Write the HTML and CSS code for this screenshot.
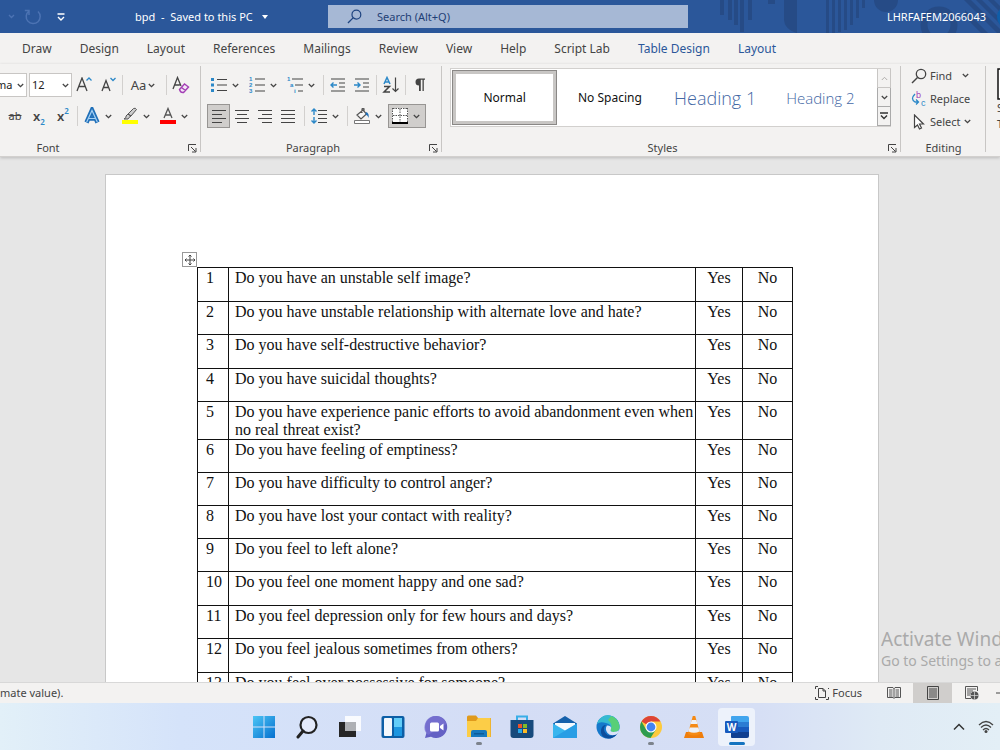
FILE: index.html
```html
<!DOCTYPE html>
<html lang="en">
<head>
  <meta charset="UTF-8">
  <title>bpd - Word</title>
  <link rel="stylesheet" href="styles.css">
</head>
<body>
  <svg class="defs" aria-hidden="true">
    <symbol id="chev" viewBox="0 0 7 5"><path d="M.8 1l2.7 2.7L6.2 1" fill="none" stroke="currentColor" stroke-width="1.3"/></symbol>
    <symbol id="launcher" viewBox="0 0 9 9"><path d="M.5 7V.5H8M3 3l4.500 4.500M8 4v4H4" fill="none" stroke="currentColor"/></symbol>
    <symbol id="lens" viewBox="0 0 16 16"><circle cx="10" cy="6" r="4.700" fill="none" stroke="currentColor" stroke-width="1.300"/><path d="M6.500 9.500L1 15" fill="none" stroke="currentColor" stroke-width="1.400"/></symbol>
  </svg>

  <header class="titlebar">
    <svg class="art" viewBox="0 0 340 33" aria-hidden="true">
      <g fill="#264b86">
        <path d="M60 0h4v15h-4zM68 0h4v20h-4zM74 0h4v25h-4zM80 0h4v32h-4zM88 0h4v20h-4zM108 0h7v4h-7z"/>
        <path d="M124 0h13v33q-13-4-13-14zM166 0h3v33h-3zM172 0h3v33h-3zM178 0h3v32h-3zM184 0h3v30h-3zM190 0h3v25h-3zM196 0h3v18h-3zM202 0h3v8h-3z"/>
        <circle cx="226" cy="0" r="12"/>
        <path d="M304 0h7l29 29v4h-3zM316 0h6l18 18v6zM328 0h6l6 6v6zM305 10l23 23h-7l-16-16z"/>
      </g>
      <circle cx="279" cy="25" r="15" fill="none" stroke="#264b86" stroke-width="7"/>
    </svg>
    <div class="quick">
      <svg width="16" height="18" viewBox="0 0 16 18"><path d="M-3 5a6 6 0 0 1 0 9M9 7l2.500 2.500L14 7" fill="none" stroke="#4c73b3" stroke-width="1.400"/></svg>
      <button class="redo" aria-label="Repeat"><svg width="18" height="18" viewBox="0 0 18 18"><path d="M14 3.500a7 7 0 1 1-9-.5M5 7V2.500H.8" fill="none" stroke="#4c73b3" stroke-width="1.500"/></svg></button>
      <button aria-label="Customize quick access"><svg width="8" height="8" viewBox="0 0 8 8"><path d="M.5 1h7M1 4l3 3 3-3" fill="none" stroke="#fff" stroke-width="1.400"/></svg></button>
    </div>
    <button class="doc-name">bpd&nbsp; -&nbsp; Saved to this PC <svg width="6" height="4" viewBox="0 0 6 4"><path d="M0 0h6L3 4z" fill="#fff"/></svg></button>
    <label class="search">
      <svg width="15" height="15"><use href="#lens"/></svg>
      <input type="text" placeholder="Search (Alt+Q)" aria-label="Search">
    </label>
    <span class="user">LHRFAFEM2066043</span>
    <span class="avatar"></span>
  </header>

  <nav class="tabs">
    <a href="#draw">Draw</a>
    <a href="#design">Design</a>
    <a href="#page-layout">Layout</a>
    <a href="#references">References</a>
    <a href="#mailings">Mailings</a>
    <a href="#review">Review</a>
    <a href="#view">View</a>
    <a href="#help">Help</a>
    <a href="#script-lab">Script Lab</a>
    <a href="#table-design" class="context">Table Design</a>
    <a href="#table-layout" class="context">Layout</a>
  </nav>

  <div class="ribbon">
    <section class="group font-group">
      <div class="row">
        <span class="combo name"><select aria-label="Font"><option>ma</option></select><svg class="chev"><use href="#chev"/></svg></span>
        <span class="combo size"><select aria-label="Font size"><option>12</option></select><svg class="chev"><use href="#chev"/></svg></span>
        <button class="tool" aria-label="Grow font"><svg width="16" height="16" viewBox="0 0 16 16"><path d="M1 14L6 1l5 13M2.800 9.500h6.400" fill="none" stroke="#444" stroke-width="1.300"/><path d="M10.500 3.500L13 1l2.500 2.500" fill="none" stroke="#2b88c8" stroke-width="1.300"/></svg></button>
        <button class="tool" aria-label="Shrink font"><svg width="16" height="16" viewBox="0 0 16 16"><path d="M2 14L6 3.500 10 14M3.500 10.500h5" fill="none" stroke="#444" stroke-width="1.300"/><path d="M10.500 1L13 3.500 15.500 1" fill="none" stroke="#2b88c8" stroke-width="1.300"/></svg></button>
        <i class="sep"></i>
        <button class="case" aria-label="Change case">Aa <svg class="chev"><use href="#chev"/></svg></button>
        <i class="sep"></i>
        <button class="tool" aria-label="Clear formatting"><svg width="18" height="18" viewBox="0 0 18 18"><path d="M1 13L5.500 1.500 9 10M2.800 9h5" fill="none" stroke="#444" stroke-width="1.300"/><path d="M7.500 13.500l5-5.500 4 3-5 5.500q-3 .5-4-3zM9.500 11.500l4 3" fill="#f3e6f6" stroke="#a33eb5" stroke-width="1.400"/></svg></button>
      </div>
      <div class="row marks">
        <button class="tool" aria-label="Strikethrough"><s>ab</s></button>
        <button class="tool bold" aria-label="Subscript">x<sub>2</sub></button>
        <button class="tool bold" aria-label="Superscript">x<sup>2</sup></button>
        <i class="sep"></i>
        <button class="split" aria-label="Text effects"><svg width="16" height="18" viewBox="0 0 16 18"><path d="M2.500 15.500L8 3l5.500 12.500M4.500 11.500h7" fill="none" stroke="#1f6fb8" stroke-width="4.400"/><path d="M2.700 15L8 3.500l5.300 11.500M4.500 11.500h7" fill="none" stroke="#a5d0f3" stroke-width="1.200"/></svg><svg class="chev"><use href="#chev"/></svg></button>
        <button class="split" aria-label="Highlight"><svg width="16" height="18" viewBox="0 0 16 18"><path d="M0 13h16v4H0z" fill="#ff0"/><path d="M6 7l5.500-5.500q2-1 3 1L9 9zM6 7l-2 2v1.500L2 12h4l1-1.500L9 9z" fill="#ccc" stroke="#555"/></svg><svg class="chev"><use href="#chev"/></svg></button>
        <button class="split" aria-label="Font color"><svg width="16" height="18" viewBox="0 0 16 18"><path d="M0 13h16v4H0z" fill="#f00"/><path d="M4 11L8 1.500 12 11M5.500 8h5" fill="none" stroke="#555" stroke-width="1.300"/></svg><svg class="chev"><use href="#chev"/></svg></button>
      </div>
      <h2>Font</h2>
      <button class="launch" aria-label="Font settings"><svg width="9" height="9"><use href="#launcher"/></svg></button>
    </section>

    <section class="group para-group">
      <div class="row">
        <button class="split" aria-label="Bullets"><svg width="16" height="16" viewBox="0 0 16 16"><path d="M0 1h3v3H0zM0 6.500h3v3H0zM0 12h3v3H0z" fill="#2b88c8"/><path d="M6 2.500h10M6 8h10M6 13.500h10" stroke="#444" stroke-width="1.200"/></svg><svg class="chev"><use href="#chev"/></svg></button>
        <button class="split" aria-label="Numbering"><svg width="16" height="20" viewBox="0 0 16 20"><path d="M6 4h10M6 10h10M6 16h10" stroke="#444" stroke-width="1.200"/><g fill="#2b88c8" class="tiny"><text x="0" y="6">1</text><text x="0" y="12">2</text><text x="0" y="18">3</text></g></svg><svg class="chev"><use href="#chev"/></svg></button>
        <button class="split" aria-label="Multilevel list"><svg width="16" height="20" viewBox="0 0 16 20"><path d="M5 4h11M8 10h8M11 16h5" stroke="#444" stroke-width="1.200"/><g fill="#2b88c8" class="tiny"><text x="0" y="6">1</text><text x="3" y="12">a</text><text x="7" y="18">i</text></g></svg><svg class="chev"><use href="#chev"/></svg></button>
        <i class="sep"></i>
        <button class="tool" aria-label="Decrease indent"><svg width="16" height="16" viewBox="0 0 16 16"><path d="M1 2h14M9 6h6M9 10h6M1 14h14" stroke="#444" stroke-width="1.200"/><path d="M7 8H1M3.500 5.500L1 8l2.500 2.500" fill="none" stroke="#2b88c8" stroke-width="1.400"/></svg></button>
        <button class="tool" aria-label="Increase indent"><svg width="16" height="16" viewBox="0 0 16 16"><path d="M1 2h14M9 6h6M9 10h6M1 14h14" stroke="#444" stroke-width="1.200"/><path d="M0 8h6M3.500 5.500L6 8l-2.500 2.500" fill="none" stroke="#2b88c8" stroke-width="1.400"/></svg></button>
        <i class="sep"></i>
        <button class="tool" aria-label="Sort"><svg width="18" height="18" viewBox="0 0 18 18"><path d="M2 8l3-6.500L8 8M3 6h4" fill="none" stroke="#2b88c8" stroke-width="1.500"/><path d="M2 10.500h5.500L2 16h6" fill="none" stroke="#444" stroke-width="1.500"/><path d="M13.500 1.500v14M10.500 12.500l3 3 3-3" fill="none" stroke="#444" stroke-width="1.200"/></svg></button>
        <i class="sep"></i>
        <button class="tool" aria-label="Show marks"><svg width="12" height="14" viewBox="0 0 12 14"><path d="M5 7.500a3.200 3.200 0 0 1 0-7h6v1.300H9.800V13H8.500V1.800H6.800V13H5z" fill="#444"/></svg></button>
      </div>
      <div class="row">
        <div class="aligns">
          <button class="on" aria-label="Align left"><svg width="14" height="14" viewBox="0 0 14 14"><path d="M0 1.500h14M0 5.500h10M0 9.500h14M0 13.500h10" stroke="#444"/></svg></button>
          <button aria-label="Center"><svg width="14" height="14" viewBox="0 0 14 14"><path d="M0 1.500h14M2 5.500h10M0 9.500h14M2 13.500h10" stroke="#444"/></svg></button>
          <button aria-label="Align right"><svg width="14" height="14" viewBox="0 0 14 14"><path d="M0 1.500h14M4 5.500h10M0 9.500h14M4 13.500h10" stroke="#444"/></svg></button>
          <button aria-label="Justify"><svg width="14" height="14" viewBox="0 0 14 14"><path d="M0 1.500h14M0 5.500h14M0 9.500h14M0 13.500h14" stroke="#444"/></svg></button>
        </div>
        <i class="sep"></i>
        <button class="split" aria-label="Line spacing"><svg width="16" height="16" viewBox="0 0 16 16"><path d="M7 2.500h9M7 6.500h9M7 10.500h9M7 14.500h9" stroke="#444"/><path d="M3 1v6M.5 3.500L3 1l2.500 2.500M3 9v6M.5 12.500L3 15l2.500-2.500" fill="none" stroke="#2b88c8" stroke-width="1.400"/></svg><svg class="chev"><use href="#chev"/></svg></button>
        <i class="sep"></i>
        <button class="split" aria-label="Shading"><svg width="16" height="16" viewBox="0 0 16 16"><path d="M.5 12.500h15v3H.5z" fill="#fff" stroke="#777"/><path d="M3 7l6-5 3.500 4-5.500 5zM8 5V1q1.500-1.500 2 0v3" fill="#f8f8f8" stroke="#555" stroke-width="1.200"/><path d="M12 4q3.500 1 2.500 6-.5-3-3-3.500z" fill="#1f6fb8"/></svg><svg class="chev"><use href="#chev"/></svg></button>
        <button class="split on" aria-label="Borders"><svg width="16" height="16" viewBox="0 0 16 16"><path d="M0 0h16v16H0z" fill="#fff"/><path d="M.5 0v14M15.500 0v14M8 1v13M1 .5h14M1 7.500h14" stroke="#555" stroke-dasharray="1.500 1"/><path d="M0 15h16" stroke="#000" stroke-width="2"/></svg><svg class="chev"><use href="#chev"/></svg></button>
      </div>
      <h2>Paragraph</h2>
      <button class="launch" aria-label="Paragraph settings"><svg width="9" height="9"><use href="#launcher"/></svg></button>
    </section>

    <section class="group styles-group">
      <div class="gallery">
        <button class="style chosen">Normal</button>
        <button class="style">No Spacing</button>
        <button class="style h-one">Heading 1</button>
        <button class="style h-two">Heading 2</button>
        <div class="scroller">
          <button class="off" aria-label="Previous"><svg width="7" height="5" viewBox="0 0 7 5"><path d="M.8 4l2.700-2.700L6.200 4" fill="none" stroke="currentColor"/></svg></button>
          <button aria-label="Next"><svg class="chev"><use href="#chev"/></svg></button>
          <button aria-label="More styles"><svg width="8" height="8" viewBox="0 0 8 8"><path d="M0 1h8M1 3.500l3 3 3-3" fill="none" stroke="#333" stroke-width="1.400"/></svg></button>
        </div>
      </div>
      <h2>Styles</h2>
      <button class="launch" aria-label="Style settings"><svg width="9" height="9"><use href="#launcher"/></svg></button>
    </section>

    <section class="group edit-group">
      <button class="edit find"><svg width="16" height="16"><use href="#lens"/></svg>Find <svg class="chev"><use href="#chev"/></svg></button>
      <button class="edit"><svg width="16" height="16" viewBox="0 0 16 16"><g class="letter"><text x="5" y="7" fill="#a33eb5">b</text><text x="10" y="15" fill="#2b88c8">c</text></g><path d="M4 3Q-1 8 4 11h3M5 8.500L7.500 11 5 13.500" fill="none" stroke="#2b88c8" stroke-width="1.300"/></svg>Replace</button>
      <button class="edit"><svg width="16" height="16" viewBox="0 0 16 16"><path d="M3.500 1v12.500L6.500 11l2 4 2-1-2-4h4z" fill="#fff" stroke="#444" stroke-width="1.200"/></svg>Select<svg class="chev"><use href="#chev"/></svg></button>
      <h2>Editing</h2>
    </section>

    <section class="group last-group">
      <svg width="20" height="32" viewBox="0 0 20 32"><path d="M1 1h18v30H1z" fill="#fff" stroke="#111" stroke-width="1.500"/></svg>
      <span>S</span>
      <span>T</span>
    </section>
  </div>

  <main class="canvas">
    <article class="page">
      <div class="table-wrap">
        <button class="handle" aria-label="Move table"><svg width="12" height="12" viewBox="0 0 12 12"><path d="M6 1v10M1 6h10M4.500 2.500L6 1l1.500 1.500M4.500 9.500L6 11l1.500-1.500M2.500 4.500L1 6l1.500 1.500M9.500 4.500L11 6 9.500 7.500" fill="none" stroke="#444"/></svg></button>
        <table>
          <colgroup><col class="c-num"><col><col class="c-yes"><col class="c-no"></colgroup>
          <tr><td>1</td><td>Do you have an unstable self image?</td><td>Yes</td><td>No</td></tr>
          <tr class="short"><td>2</td><td>Do you have unstable relationship with alternate love and hate?</td><td>Yes</td><td>No</td></tr>
          <tr><td>3</td><td>Do you have self-destructive behavior?</td><td>Yes</td><td>No</td></tr>
          <tr class="short"><td>4</td><td>Do you have suicidal thoughts?</td><td>Yes</td><td>No</td></tr>
          <tr><td>5</td><td>Do you have experience panic efforts to avoid abandonment even when no real threat exist?</td><td>Yes</td><td>No</td></tr>
          <tr class="short"><td>6</td><td>Do you have feeling of emptiness?</td><td>Yes</td><td>No</td></tr>
          <tr class="short"><td>7</td><td>Do you have difficulty to control anger?</td><td>Yes</td><td>No</td></tr>
          <tr class="short"><td>8</td><td>Do you have lost your contact with reality?</td><td>Yes</td><td>No</td></tr>
          <tr class="short"><td>9</td><td>Do you feel to left alone?</td><td>Yes</td><td>No</td></tr>
          <tr><td>10</td><td>Do you feel one moment happy and one sad?</td><td>Yes</td><td>No</td></tr>
          <tr class="short"><td>11</td><td>Do you feel depression only for few hours and days?</td><td>Yes</td><td>No</td></tr>
          <tr><td>12</td><td>Do you feel jealous sometimes from others?</td><td>Yes</td><td>No</td></tr>
          <tr><td>13</td><td>Do you feel over possessive for someone?</td><td>Yes</td><td>No</td></tr>
        </table>
      </div>
    </article>
    <div class="activate">
      <strong>Activate Windows</strong>
      <span>Go to Settings to activate Windows.</span>
    </div>
  </main>

  <footer class="status">
    <span class="message">mate value).</span>
    <button class="focus"><svg width="14" height="14" viewBox="0 0 14 14"><path d="M3 .5H.5V3M.5 11v2.500H3M11 13.500h2.500V11M13.500 3V2M3.500 2.500h4.500l2.500 2.500v6.500h-7zM8 2.500V5h2.500" fill="none" stroke="#444"/></svg>Focus</button>
    <button class="view" aria-label="Read mode"><svg width="14" height="14" viewBox="0 0 14 14"><path d="M.5 1.500H6l1 1 1-1h5.500v10H8l-1 1-1-1H.5zM7 2v10M2 4h3.500M2 6h3.500M2 8h3.500M8.500 4H12M8.500 6H12M8.500 8H12M2 10h3.500M8.500 10H12" fill="none" stroke="#555"/></svg></button>
    <button class="view on" aria-label="Print layout"><svg width="12" height="14" viewBox="0 0 12 14"><path d="M.5.5h11v13H.5zM2 3h8M2 5h8M2 7h8M2 9h8M2 11h8" fill="none" stroke="#444"/></svg></button>
    <button class="view" aria-label="Web layout"><svg width="14" height="14" viewBox="0 0 14 14"><path d="M6 12.500H.5V.5h12V5M2 3h9M2 5h6M2 7h4M2 9h3" fill="none" stroke="#555"/><circle cx="9.500" cy="9.500" r="4" fill="#555"/><path d="M5.500 9.500h8M9.500 5.500v8" stroke="#ddd" stroke-width=".7"/></svg></button>
    <button class="zoom-out" aria-label="Zoom out"><svg width="4" height="2" viewBox="0 0 4 2"><path d="M0 1h4" stroke="#444"/></svg></button>
  </footer>

  <div class="taskbar">
    <div class="apps">
      <button aria-label="Start"><svg width="24" height="24" viewBox="0 0 24 24"><defs><linearGradient id="win" x1="0" y1="0" x2="1" y2="1"><stop offset="0" stop-color="#4cc5f5"/><stop offset="1" stop-color="#0670cf"/></linearGradient></defs><path d="M1 1h10.500v10.500H1zM12.500 1H23v10.500H12.500zM1 12.500h10.500V23H1zM12.500 12.500H23V23H12.500z" fill="url(#win)"/></svg></button>
      <button aria-label="Search"><svg width="24" height="24" viewBox="0 0 24 24"><circle cx="13.500" cy="10" r="8" fill="#e4eafa" stroke="#222" stroke-width="2.200"/><path d="M8 16l-5 6" stroke="#222" stroke-width="3" stroke-linecap="round"/></svg></button>
      <button aria-label="Task view"><svg width="24" height="24" viewBox="0 0 24 24"><path d="M1 7h17v15H1z" fill="#262626"/><path d="M7 1h16v15H7z" fill="#fff" fill-opacity=".85"/><path d="M7 7h11v9H7z" fill="#aeb0b4"/></svg></button>
      <button aria-label="Widgets"><svg width="24" height="24" viewBox="0 0 24 24"><rect x=".5" y="1" width="23" height="22" rx="2" fill="#0d5fa6"/><rect x="3" y="3" width="8" height="18" rx="1" fill="#f4f8fc"/><path d="M13 3h8v9h-8z" fill="#62cdf8"/><path d="M13 12h8v9h-8z" fill="#1c96e0"/></svg></button>
      <button aria-label="Chat"><svg width="24" height="24" viewBox="0 0 24 24"><path d="M12 1a11 11 0 1 1-5 20.700L1 23l1.500-5.500A11 11 0 0 1 12 1z" fill="#6461c4"/><path d="M12 1a11 11 0 0 1 10.500 8L4 20A11 11 0 0 1 12 1z" fill="#7b74d3" fill-opacity=".7"/><rect x="6" y="7.500" width="9" height="9" rx="1.500" fill="#fff"/><path d="M16 11l3.500-2.500v7L16 13z" fill="#fff"/></svg></button>
      <button aria-label="File Explorer" class="running"><svg width="24" height="24" viewBox="0 0 24 24"><path d="M0 2q0-1.500 1.500-1.500H9L11 3H24v19H0z" fill="#e09a1c"/><path d="M0 6h9l2-3h12.500v19H0z" fill="#fccd47"/><path d="M4 22v-5q0-2 2-2h12q2 0 2 2v5z" fill="#1778bd"/><path d="M7 18h10v1.500H7z" fill="#0c5b99"/></svg></button>
      <button aria-label="Store"><svg width="24" height="24" viewBox="0 0 24 24"><path d="M7 6V1.500h10V6" fill="none" stroke="#39aee8" stroke-width="2"/><path d="M.5 5h23v15q0 3-3 3h-17q-3 0-3-3z" fill="#174a7c"/><path d="M8 9h4v4H8z" fill="#ef5228"/><path d="M13 9h4v4h-4z" fill="#7fba28"/><path d="M8 14h4v4H8z" fill="#28a8ea"/><path d="M13 14h4v4h-4z" fill="#fdbb25"/></svg></button>
      <button aria-label="Mail"><svg width="24" height="24" viewBox="0 0 24 24"><path d="M0 8.500L12 1l12 7.500V22H0z" fill="#1561ab"/><path d="M2 8h20v6l-10 5-10-5z" fill="#f4fafe"/><path d="M0 8.500l12 7 12-7V23H0z" fill="#38b5ee"/><path d="M24 8.500V23H0z" fill="#1f8fe0" fill-opacity=".6"/></svg></button>
      <button aria-label="Edge"><svg width="24" height="24" viewBox="0 0 24 24"><circle cx="12" cy="12" r="11.500" fill="#1578cb"/><path d="M.8 9A11.500 11.500 0 0 1 23.500 12q0 5-6 5-4 0-2.500-3 .5-5-5-6Q4 6 .8 9z" fill="#35b9d2"/><path d="M15 1A11.500 11.500 0 0 1 23.500 12q0 5-6 5-4 0-2.500-3 2-5-3-9z" fill="#58cf77"/><path d="M10 10q-4 3-.5 8t12 .5Q17 24 12 23.500 4 22 5 15q1-5 5-5z" fill="#0c4d9c"/><path d="M11 10.500q5 0 4 3.500-1.500 3 2.500 3 3.500 0 6-2-1 3-3 4.500-6 2-9-1.500-3-4-.5-7.500z" fill="#dbe3f8"/></svg></button>
      <button aria-label="Chrome" class="running"><svg width="24" height="24" viewBox="0 0 24 24"><circle cx="12" cy="12" r="11" fill="#fdca3c"/><path d="M12 12L2.500 6.500A11 11 0 0 1 21.500 6.500H12z" fill="#dd4437"/><path d="M2.500 6.500A11 11 0 0 0 11.500 23L16.800 14.800 12 12 7.200 14.800z" fill="#2d9c50"/><circle cx="12" cy="12" r="5.500" fill="#fff"/><circle cx="12" cy="12" r="4.400" fill="#4384f3"/></svg></button>
      <button aria-label="VLC"><svg width="24" height="24" viewBox="0 0 24 24"><path d="M4 17h16l2 6H2z" fill="#ef7d0b"/><path d="M10.800 1h2.400l5 18q-6 3-12.400 0z" fill="#f58a14"/><path d="M9.700 5h4.600l1.200 4h-7zM7.600 12.500h8.800l1.100 4q-5.500 2.500-11 0z" fill="#eef0f4"/></svg></button>
      <button aria-label="Word" class="current"><svg width="24" height="24" viewBox="0 0 24 24"><path d="M7 1h15q2 0 2 2v4H6V2q0-1 1-1z" fill="#41a5ee"/><path d="M6 7h18v5H6z" fill="#2b7cd3"/><path d="M6 12h18v5H6z" fill="#185abd"/><path d="M6 17h18v4q0 2-2 2H7q-1 0-1-1z" fill="#103f91"/><rect y="6" width="13" height="12" rx="1" fill="#185abd"/><text x="6.500" y="15.500" text-anchor="middle" fill="#fff" class="w">W</text></svg></button>
    </div>
    <div class="tray">
      <button aria-label="Hidden icons"><svg width="12" height="8" viewBox="0 0 12 8"><path d="M1 6.500l5-5 5 5" fill="none" stroke="#333" stroke-width="1.500"/></svg></button>
      <button aria-label="Network"><svg width="16" height="14" viewBox="0 0 16 14"><path d="M1 5q7-7 14 0M3 7.500q5-5 10 0M5 10q3-3 6 0" fill="none" stroke="#444" stroke-width="1.300"/><circle cx="8" cy="11.500" r="1.500" fill="#444"/></svg></button>
    </div>
  </div>
</body>
</html>
```
FILE: styles.css
```css
* {
  box-sizing: border-box;
}

body {
  margin: 0;
  height: 100vh;
  display: flex;
  flex-direction: column;
  overflow: hidden;
  font-family: "Noto Sans", "Open Sans", sans-serif;
  font-size: 12px;
  line-height: 16px;
  color: #444;
}

button, input, select {
  font: inherit;
  color: inherit;
  border: 0;
  padding: 0;
  margin: 0;
  background: none;
}

button {
  display: flex;
  align-items: center;
  justify-content: center;
}

svg {
  display: block;
  flex: none;
}

.defs {
  position: absolute;
  width: 0;
  height: 0;
}

.chev {
  width: 7px;
  height: 5px;
}

/* title bar */
.titlebar {
  position: relative;
  flex: none;
  height: 33px;
  display: flex;
  align-items: center;
  background: #2b579a;
  color: #fff;
  font-size: 11px;
  overflow: hidden;
}

.titlebar > * {
  position: relative;
}

.titlebar .art {
  position: absolute;
  right: 0;
  top: 0;
  width: 340px;
  height: 33px;
}

.quick {
  display: flex;
  align-items: center;
  width: 135px;
}

.redo {
  margin: 0 15px 0 8px;
}

.doc-name {
  width: 193px;
  gap: 6px;
  justify-content: flex-start;
  white-space: pre;
}

.search {
  flex: 0 1 360px;
  height: 23px;
  padding: 0 19px;
  display: flex;
  align-items: center;
  gap: 15px;
  background: #a6b8d5;
  color: #1f4480;
}

.search input {
  flex: 1;
  min-width: 0;
}

.search input::placeholder {
  color: #1f3f76;
  opacity: 1;
}

.user {
  margin-left: auto;
}

.avatar {
  width: 24px;
  height: 24px;
  margin: 0 -21px 0 11px;
  border-radius: 50%;
  background: #0f5ea8;
}

/* ribbon tabs */
.tabs {
  flex: none;
  display: flex;
  align-items: center;
  gap: 28px;
  height: 31px;
  padding-left: 22px;
  background: #f3f2f1;
  white-space: nowrap;
}

.tabs a {
  color: #444;
  text-decoration: none;
}

.tabs .context {
  color: #2b579a;
}

/* ribbon */
.ribbon {
  flex: none;
  display: grid;
  grid-template-columns: 201px 241px 1fr 85px 14px;
  height: 93px;
  background: #f3f2f1;
  border-bottom: 1px solid #d2d0ce;
  box-shadow: 0 1px 3px #bbb;
  position: relative;
  z-index: 1;
  font-size: 11px;
}

.group {
  position: relative;
  display: flex;
  flex-direction: column;
  min-width: 0;
}

.group::after {
  content: "";
  position: absolute;
  right: 0;
  top: 2px;
  bottom: 4px;
  width: 1px;
  background: #c8c6c4;
}

.last-group::after {
  display: none;
}

.group h2 {
  margin: auto 0 0;
  font-size: 11px;
  font-weight: 400;
  text-align: center;
}

.font-group, .para-group {
  padding-top: 9px;
}

.font-group h2 {
  margin-right: 105px;
}

.para-group h2 {
  margin-left: -17px;
}

.styles-group h2 {
  margin-right: 16px;
}

.launch {
  position: absolute;
  right: 4px;
  bottom: 3px;
}

.row {
  display: flex;
  align-items: center;
  height: 24px;
  margin-bottom: 7px;
}

.para-group .row {
  padding-left: 6px;
}

.sep {
  width: 1px;
  height: 20px;
  margin: 0 2px;
  background: #d2d0ce;
}

.combo {
  position: relative;
  display: flex;
  align-items: center;
  height: 24px;
  background: #fff;
  border: 1px solid #c8c6c4;
}

.combo select {
  width: 100%;
  appearance: none;
  color: #222;
}

.combo .chev {
  position: absolute;
  right: 2px;
}

.combo.name {
  width: 27px;
  margin-right: 2px;
  border-left: 0;
}

.combo.name select {
  text-indent: -4px;
}

.combo.size {
  width: 43px;
  padding-left: 2px;
}

.tool {
  width: 24px;
  height: 24px;
}

.case {
  width: 36px;
  gap: 2px;
  margin-right: 3px;
  font-size: 13px;
}

.split {
  width: 38px;
  height: 24px;
  padding-left: 4px;
  gap: 5px;
  justify-content: flex-start;
}

.on {
  background: #d0cecc;
  box-shadow: inset 0 0 0 1px #979593;
}

.marks {
  padding-left: 3px;
}

.bold {
  font-size: 13px;
  font-weight: 600;
}

.bold sub, .bold sup {
  font-size: 8px;
  line-height: 8px;
  color: #2b88c8;
}

.bold sub {
  align-self: flex-end;
  padding-bottom: 2px;
}

.bold sup {
  align-self: flex-start;
  padding-top: 3px;
}

.aligns {
  display: grid;
  grid-template-columns: repeat(4, 23px);
  padding-right: 3px;
}

.aligns button {
  height: 24px;
}

.tiny {
  font-family: "Liberation Sans", Arial, sans-serif;
  font-size: 6px;
  font-weight: 700;
}

.letter {
  font-family: "Liberation Sans", Arial, sans-serif;
  font-size: 9px;
}

.styles-group {
  padding: 4px 10px 0 8px;
}

.gallery {
  display: grid;
  grid-template-columns: repeat(4, 1fr) 18px;
  height: 59px;
  padding-left: 1px;
  background: #fff;
  border: 1px solid #d2d0ce;
  border-right: 0;
}

.style {
  color: #111;
  font-size: 12px;
  white-space: nowrap;
}

.chosen {
  margin: 1px 0;
  border: 1px solid #8a8886;
  box-shadow: inset 0 0 0 3px #c8c6c4;
}

.h-one, .h-two {
  color: #4468a5;
  font-family: "Open Sans", "Noto Sans", sans-serif;
  font-weight: 300;
}

.h-one {
  font-size: 18px;
}

.h-two {
  font-size: 15px;
}

.scroller {
  display: grid;
  grid-template-rows: repeat(3, 1fr);
  margin-left: 4px;
}

.scroller button {
  border: 1px solid #aaa;
  border-top: 0;
  background: #f3f2f1;
}

.scroller .off {
  color: #b0aeac;
  border-color: #c8c6c4;
}

.edit-group {
  padding-left: 10px;
}

.edit {
  height: 23px;
  gap: 3px;
  justify-content: flex-start;
}

.find .chev {
  margin-left: 7px;
}

.edit-group h2 {
  margin-left: -10px;
}

.last-group {
  padding: 4px 0 0 11px;
  overflow: hidden;
}

/* document */
.canvas {
  position: relative;
  flex: 1;
  min-height: 0;
  padding: 17px 121px 0 105px;
  background: #e6e6e6;
  overflow: hidden;
}

.page {
  min-height: 100%;
  padding: 92px 85px 0 91px;
  background: #fff;
  border: 1px solid #c8c8c8;
  border-bottom: 0;
}

.table-wrap {
  position: relative;
}

.handle {
  position: absolute;
  left: -15px;
  top: -15px;
  width: 15px;
  height: 15px;
  background: #fff;
  border: 1px solid #999;
}

table {
  width: 100%;
  table-layout: fixed;
  border-collapse: collapse;
  font-family: "Liberation Serif", "Times New Roman", serif;
  font-size: 16px;
  line-height: 18px;
  color: #111;
}

.c-num {
  width: 31px;
}

.c-yes {
  width: 47px;
}

.c-no {
  width: 50px;
}

td {
  height: 34px;
  padding: 1px 0 0 6px;
  border: 1px solid #111;
  vertical-align: top;
}

.short td {
  height: 33px;
}

td:first-child {
  padding-left: 8px;
}

td:nth-child(n+3) {
  padding-left: 0;
  text-align: center;
}

.activate {
  position: absolute;
  right: 0;
  bottom: 11px;
  width: 119px;
  display: flex;
  flex-direction: column;
  overflow: hidden;
  white-space: nowrap;
  font-size: 14px;
  line-height: 20px;
  color: #aaa;
}

.activate strong {
  font-size: 19px;
  line-height: 24px;
  font-weight: 400;
}

/* status bar */
.status {
  flex: none;
  display: flex;
  align-items: center;
  height: 21px;
  background: #f3f2f1;
  border-top: 1px solid #d8d8d8;
  font-size: 11px;
  overflow: hidden;
}

.message {
  flex: 1;
}

.focus {
  gap: 3px;
  margin-right: 12px;
}

.view {
  width: 39px;
  height: 20px;
}

.status .on {
  box-shadow: none;
}

.zoom-out {
  width: 9px;
  justify-content: flex-end;
}

/* taskbar */
.taskbar {
  position: relative;
  flex: none;
  display: flex;
  justify-content: center;
  height: 47px;
  background: linear-gradient(90deg, #e2f0f8, #d5e3fa 18%, #d4ddf5 50%, #d6dff5 76%, #dfeaf5 88%, #e3eff6);
}

.apps {
  display: flex;
  align-items: center;
}

.apps button {
  position: relative;
  width: 43px;
  height: 47px;
}

.apps svg {
  position: relative;
}

.running::after, .current::after {
  content: "";
  position: absolute;
  left: 50%;
  bottom: 5px;
  width: 6px;
  height: 3px;
  margin-left: -3px;
  border-radius: 2px;
  background: #7d838c;
}

.current::after {
  width: 16px;
  margin-left: -8px;
  background: #1473c0;
}

.current::before {
  content: "";
  position: absolute;
  inset: 5px 3px 4px;
  border-radius: 4px;
  background: #edf2fb;
}

.w {
  font-size: 10px;
  font-weight: 700;
}

.tray {
  position: absolute;
  right: 6px;
  top: 0;
  bottom: 0;
  display: flex;
  align-items: center;
  gap: 13px;
}
```
